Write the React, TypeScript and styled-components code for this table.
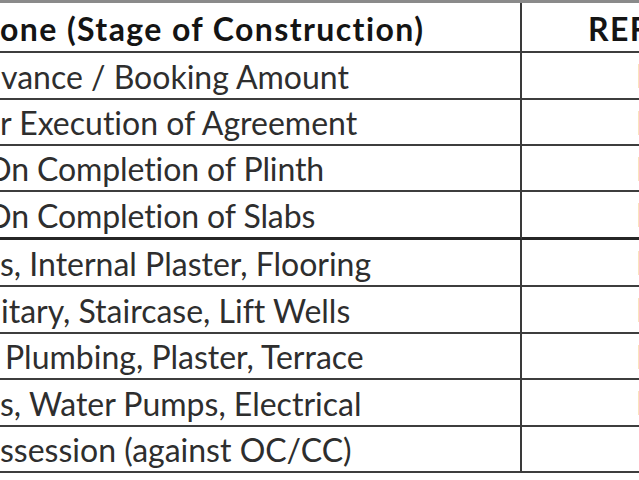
import styled, { createGlobalStyle } from "styled-components";

const GlobalStyle = createGlobalStyle`
  html, body {
    margin: 0;
    padding: 0;
    background: #ffffff;
    overflow: hidden;
  }
  body {
    font-family: "Lato", "Liberation Sans", sans-serif;
    font-variant-ligatures: none;
  }
`;

const Page = styled.div`
  width: 639px;
  height: 480px;
  overflow: hidden;
  background: #ffffff;
`;

const Table = styled.div`
  display: grid;
  grid-template-columns: 522px 1fr;
  grid-template-rows: 50px 47px 46px 46px 48px 47px 47px 46px 47px 46px;
  border-top: 3px solid #8a8a8a;
`;

const Cell = styled.div<{ $first?: boolean; $thick?: boolean }>`
  display: flex;
  align-items: center;
  overflow: hidden;
  white-space: nowrap;
  box-sizing: border-box;
  border-bottom: ${(p) => (p.$thick ? "3px solid #262626" : "2px solid #3d3d3d")};
  border-right: ${(p) => (p.$first ? "2px solid #3a3a3a" : "none")};
`;

const HeadText = styled.span<{ $shift?: number }>`
  font-weight: 700;
  font-size: 32px;
  letter-spacing: 1.4px;
  color: #141414;
  margin-left: ${(p) => p.$shift ?? 0}px;
  padding-top: 3px;
`;

const BodyText = styled.span<{ $shift?: number }>`
  font-size: 32px;
  letter-spacing: ${(p) => (p.$shift === -14 ? "-0.1px" : "0px")};
  color: #2e2e2e;
  margin-left: ${(p) => p.$shift ?? 0}px;
  padding-top: 1px;
`;

const RefText = styled.span`
  font-size: 32px;
  color: #6a6a6a;
  margin-left: 114px;
`;

const rows = [
  { text: "vance / Booking Amount", shift: 1, ref: "Non" },
  { text: "r Execution of Agreement", shift: 0, ref: "Non" },
  { text: "On Completion of Plinth", shift: -14, ref: "Non" },
  { text: "On Completion of Slabs", shift: -14, ref: "Non" },
  { text: "s, Internal Plaster, Flooring", shift: 0, ref: "Non" },
  { text: "itary, Staircase, Lift Wells", shift: 1, ref: "Non" },
  { text: "Plumbing, Plaster, Terrace", shift: 5, ref: "Non" },
  { text: "s, Water Pumps, Electrical", shift: 0, ref: "Non" },
  { text: "ssession (against OC/CC)", shift: 0, ref: "" },
];

export default function App() {
  return (
    <Page>
      <GlobalStyle />
      <Table>
        <Cell $first>
          <HeadText>one (Stage of Construction)</HeadText>
        </Cell>
        <Cell>
          <HeadText $shift={66}>REF</HeadText>
        </Cell>
        {rows.map((r, i) => [
          <Cell key={`a${i}`} $first $thick={i === 3}>
            <BodyText $shift={r.shift}>{r.text}</BodyText>
          </Cell>,
          <Cell key={`b${i}`} $thick={i === 3}>
            {r.ref && <RefText>{r.ref}</RefText>}
          </Cell>,
        ])}
      </Table>
    </Page>
  );
}
